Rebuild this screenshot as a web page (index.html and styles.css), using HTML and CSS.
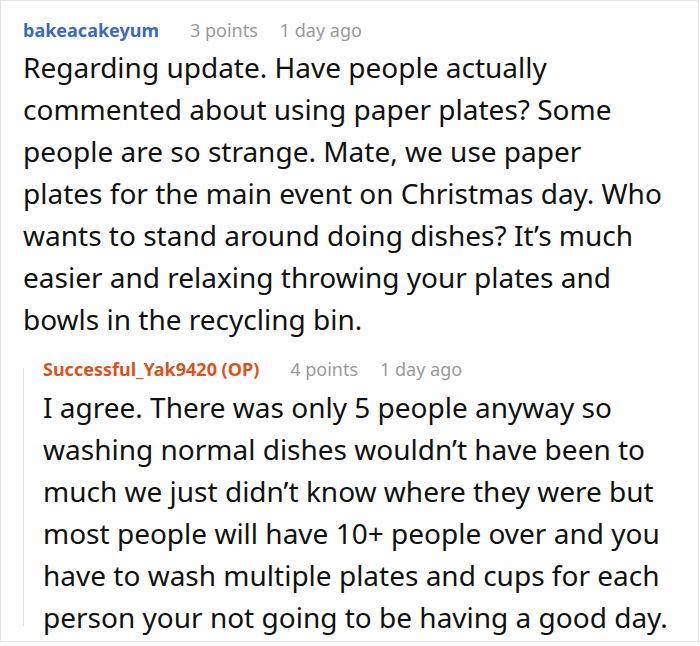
FILE: index.html
```html
<!DOCTYPE html>
<html>
<head>
<meta charset="utf-8">
<link rel="stylesheet" href="styles.css">
</head>
<body>
<div class="frame">
  <div class="comment">
    <div class="meta">
      <span class="user">bakeacakeyum</span>
      <span class="info">3 points</span>
      <span class="info">1 day ago</span>
    </div>
    <p class="text">Regarding update. Have people actually commented about using paper plates? Some people are so strange. Mate, we use paper plates for the main event on Christmas day. Who wants to stand around doing dishes? It’s much easier and relaxing throwing your plates and bowls in the recycling bin.</p>
    <div class="reply">
      <div class="meta">
        <span class="user op">Successful_Yak9420 (OP)</span>
        <span class="info">4 points</span>
        <span class="info">1 day ago</span>
      </div>
      <p class="text">I agree. There was only 5 people anyway so washing normal dishes wouldn’t have been to much we just didn’t know where they were but most people will have 10+ people over and you have to wash multiple plates and cups for each person your not going to be having a good day.</p>
    </div>
  </div>
</div>
</body>
</html>
```
FILE: styles.css
```css
html, body {
  margin: 0;
  padding: 0;
  background: #fff;
}
.frame {
  width: 699px;
  height: 642px;
  border: 1px solid #e4e4e4;
  box-sizing: border-box;
  overflow: hidden;
  font-family: "Noto Sans", "Open Sans", sans-serif;
}
.comment {
  padding: 15px 0 0 22px;
}
.meta {
  display: flex;
  font-size: 18px;
  line-height: 28px;
}
.user {
  font-weight: 700;
  color: #3a6bb8;
  margin-right: 31px;
}
.user.op {
  color: #d9531e;
}
.info {
  color: #9a9a9a;
  margin-right: 22px;
}
.text {
  margin: 2px 0 0 0;
  font-size: 28px;
  line-height: 42px;
  color: #111;
  padding-right: 32px;
}
.reply {
  margin-top: 15px;
  padding-left: 20px;
  background: linear-gradient(#e3e3e3, #e3e3e3) no-repeat 0 13px / 1px 258px;
}
.reply .text {
  margin-top: 3px;
  padding-right: 22px;
}
```
